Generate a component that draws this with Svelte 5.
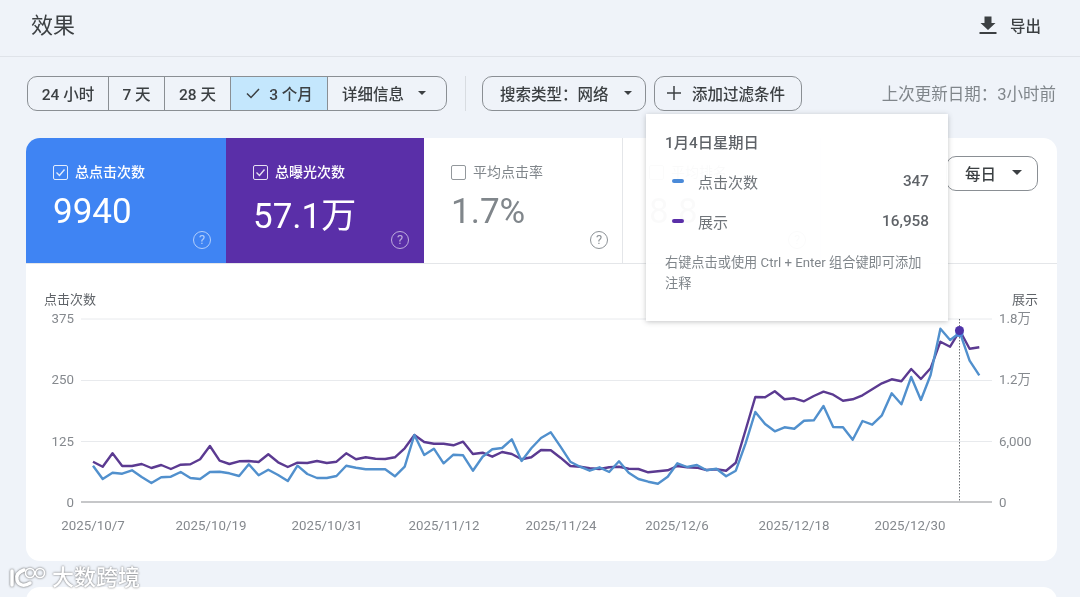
<script>
  const seg = (base, arr) => arr.map((v) => base + v / 3);
  const clicks = [
    ...seg(290, [527,567,548,551,541,561,579,562,560,546,564,567,546,545,550,558,523,556,539,555,573,527,552,564,564,558,527]),
    ...seg(380, [263,268,268,268,289,260,165,225,206,250,224,226,272,230,208,204,178,243,205,174,157,200,245,260,272,262,276,244,278,297,305,311,290,250,261,255,271,266]),
    ...seg(310, [499,482,400,306,342,364,352,356,332,331,288,351,352,389,333,344,316,250,283,201,270,195,56,90,68,152,196])
  ];
  const views = [
    ...seg(290, [515,530,490,528,528,522,534,525,537,524,523,508,468,512,522,514,513,516,493,517,531,518,519,513,519,515,490]),
    ...seg(380, [238,232,236,237,232,205,165,186,191,191,196,185,222,218,230,216,222,238,232,210,211,233,258,260,265,267,262,260,266,267,277,274,271,258,262,263,270,268]),
    ...seg(310, [482,458,360,261,262,244,268,265,274,258,245,254,272,268,256,238,220,208,214,177,207,175,95,110,62,116,112])
  ];
  const toPoints = (ys) => ys.map((y, i) => `${(93 + i * 9.74).toFixed(1)},${y.toFixed(1)}`).join(' ');

  const ranges = [
    { label: '24 小时' },
    { label: '7 天' },
    { label: '28 天' },
    { label: '3 个月', active: true }
  ];
  const tiles = [
    { name: '总点击次数', value: '9940', kind: 'blue', checked: true },
    { name: '总曝光次数', value: '57.1万', kind: 'purple', checked: true },
    { name: '平均点击率', value: '1.7%', kind: 'plain' },
    { name: '平均排名', value: '8.8', kind: 'plain' }
  ];
  const grid = [
    { y: 319, label: 318, left: '375', right: '1.8万' },
    { y: 380.5, label: 379, left: '250', right: '1.2万' },
    { y: 441.5, label: 441, left: '125', right: '6,000' }
  ];
  const dates = [
    ['2025/10/7', 93], ['2025/10/19', 211], ['2025/10/31', 327], ['2025/11/12', 444],
    ['2025/11/24', 561], ['2025/12/6', 677], ['2025/12/18', 794], ['2025/12/30', 910]
  ];
</script>

<div class="page">
  <header class="top">
    <h1>效果</h1>
    <div class="export">
      <svg width="20" height="20" viewBox="0 0 20 20"><path d="M6.500 1.500h7v6.500h4L10 15 2.500 8h4zM1.500 17h17v2h-17z" fill="#3c4043"/></svg>
      <span>导出</span>
    </div>
  </header>

  <div class="toolbar">
    <div class="segments">
      {#each ranges as r}
        <div class="seg" class:active={r.active}>
          {#if r.active}
            <svg width="16" height="16" viewBox="0 0 16 16"><path d="M2 8.500l4 4 8-8.500" fill="none" stroke="#3c4043" stroke-width="1.500"/></svg>
          {/if}
          {r.label}
        </div>
      {/each}
      <div class="seg more">详细信息<i class="caret"></i></div>
    </div>
    <div class="sep"></div>
    <div class="pill search">搜索类型：网络<i class="caret"></i></div>
    <div class="pill add">
      <svg width="14" height="14" viewBox="0 0 14 14"><path d="M7 0v14M0 7h14" stroke="#3c4043" stroke-width="1.500"/></svg>
      添加过滤条件
    </div>
    <div class="updated">上次更新日期：3小时前</div>
  </div>

  <section class="card">
    <div class="tiles">
      {#each tiles as t}
        <div class="tile {t.kind}">
          <div class="tile-head">
            <span class="box">
              {#if t.checked}
                <svg width="11" height="11" viewBox="0 0 11 11"><path d="M1.500 5.500l3 3 5-6" fill="none" stroke="currentColor" stroke-width="1.400"/></svg>
              {/if}
            </span>
            {t.name}
          </div>
          <div class="tile-value">{t.value}</div>
          <span class="help">?</span>
        </div>
      {/each}
      <div class="period">每日<i class="caret big"></i></div>
    </div>

    <svg class="chart" width="1031" height="297" viewBox="26 264 1031 297">
      <text class="axis-title" x="44" y="304">点击次数</text>
      <text class="axis-title" x="1038" y="304" text-anchor="end">展示</text>
      {#each grid as g}
        <line x1="81" x2="992" y1={g.y} y2={g.y} stroke="#e8eaed" />
        <text class="tick" x="74" y={g.label + 4.500} text-anchor="end">{g.left}</text>
        <text class="tick" x="999" y={g.label + 4.500}>{g.right}</text>
      {/each}
      <line x1="81" x2="992" y1="502" y2="502" stroke="#8d9094" stroke-width="1.200" />
      <text class="tick" x="74" y="507" text-anchor="end">0</text>
      <text class="tick" x="999" y="507">0</text>
      {#each dates as [label, x]}
        <text class="tick" x={x} y="530" text-anchor="middle">{label}</text>
      {/each}
      <line x1="959.500" x2="959.500" y1="319" y2="502" stroke="#6d7175" stroke-dasharray="1.500 1.500" />
      <polyline points={toPoints(views)} fill="none" stroke="#5b3a91" stroke-width="2.400" stroke-linejoin="round" />
      <polyline points={toPoints(clicks)} fill="none" stroke="#5190cd" stroke-width="2.400" stroke-linejoin="round" />
      <circle cx="959.500" cy="333" r="4" fill="#4a86d8" />
      <circle cx="959.500" cy="330.500" r="4.500" fill="#4f33a8" />
    </svg>
  </section>

  <div class="next-card"></div>

  <aside class="tooltip">
    <div class="tip-title">1月4日星期日</div>
    <div class="tip-row"><i class="dash c"></i><span>点击次数</span><b>347</b></div>
    <div class="tip-row"><i class="dash v"></i><span>展示</span><b>16,958</b></div>
    <p>右键点击或使用 Ctrl + Enter 组合键即可添加注释</p>
  </aside>

  <div class="mark">
    <svg width="40" height="24" viewBox="0 0 40 24">
      <path d="M3 5v14M15 4C9 6 7 10 8 14c1 5 7 7 13 3" fill="none" stroke="#fff" stroke-width="3.500" stroke-linecap="round"/>
      <circle cx="21" cy="7" r="4.500" fill="none" stroke="#fff" stroke-width="1.600"/>
      <circle cx="31" cy="7" r="4.500" fill="none" stroke="#fff" stroke-width="1.600"/>
    </svg>
    <span>大数跨境</span>
  </div>
</div>

<style>
  :global(body) {
    margin: 0;
    background: #eff3f9;
    overflow: hidden;
  }
  .page {
    position: relative;
    width: 1080px;
    height: 597px;
    overflow: hidden;
    background: #eff3f9;
    color: #3c4043;
    font-family: Roboto, "Noto Sans CJK SC", sans-serif;
    filter: blur(.35px);
  }
  .top {
    height: 57px;
    box-sizing: border-box;
    border-bottom: 1px solid #dfe3e9;
    display: flex;
    align-items: center;
    justify-content: space-between;
    padding: 0 39px 6px 31px;
  }
  h1 {
    margin: 0;
    font-size: 22px;
    line-height: 30px;
    font-weight: 400;
    padding-bottom: 0;
    transform: translateY(1px);
  }
  .export {
    display: flex;
    align-items: center;
    gap: 12px;
    font-size: 15.500px;
    font-weight: 500;
  }
  .toolbar {
    display: flex;
    align-items: stretch;
    height: 35px;
    margin: 19px 24px 0 27px;
    font-size: 15.500px;
    font-weight: 500;
  }
  .segments {
    display: flex;
    width: 420px;
    box-sizing: border-box;
    border: 1px solid #8a8f94;
    border-radius: 10px;
    overflow: hidden;
  }
  .seg {
    display: flex;
    align-items: center;
    justify-content: center;
    gap: 8px;
    box-sizing: border-box;
    border-right: 1px solid #8a8f94;
    flex: none;
    white-space: nowrap;
    padding-bottom: 2px;
  }
  .seg:nth-child(1) { width: 81px; }
  .seg:nth-child(2) { width: 56px; }
  .seg:nth-child(3) { width: 66px; }
  .seg:nth-child(4) { width: 97px; }
  .seg.active { background: #c4e7fd; }
  .seg.more {
    flex: 1;
    border-right: 0;
    justify-content: flex-start;
    padding-left: 14px;
    gap: 14px;
  }
  .caret {
    display: inline-block;
    width: 0;
    height: 0;
    border: 4px solid transparent;
    border-top: 4px solid #3c4043;
    border-bottom: 0;
  }
  .caret.big {
    border-width: 5px 5px 0;
  }
  .sep {
    width: 1px;
    background: #d8dce1;
    margin: 0 16px 0 18px;
  }
  .pill {
    display: flex;
    align-items: center;
    box-sizing: border-box;
    border: 1px solid #8a8f94;
    border-radius: 10px;
    white-space: nowrap;
    padding-bottom: 2px;
  }
  .search {
    width: 164px;
    padding-left: 17px;
    gap: 15px;
  }
  .add {
    width: 148px;
    margin-left: 8px;
    padding-left: 12px;
    gap: 11px;
  }
  .updated {
    margin-left: auto;
    align-self: center;
    font-size: 16.500px;
    font-weight: 400;
    color: #80868b;
    white-space: nowrap;
    padding-bottom: 2px;
  }
  .card {
    width: 1031px;
    height: 423px;
    margin: 27px 0 0 26px;
    background: #fff;
    border-radius: 14px;
    overflow: hidden;
  }
  .tiles {
    display: flex;
    height: 126px;
    box-sizing: border-box;
    border-bottom: 1px solid #e4e6e9;
  }
  .tile {
    position: relative;
    width: 198px;
    box-sizing: border-box;
    padding: 25px 0 0 27px;
    color: #80868b;
    border-right: 1px solid #e4e6e9;
  }
  .tile:first-child { width: 200px; }
  .tile:nth-child(3) { width: 199px; }
  .tile:nth-child(4) { padding-left: 26px; }
  .tile.blue {
    background: #3f84f3;
    color: #fff;
    border: 0;
  }
  .tile.purple {
    background: #5a2fa8;
    color: #fff;
    border: 0;
  }
  .tile-head {
    display: flex;
    align-items: center;
    gap: 7px;
    font-size: 14px;
    font-weight: 500;
    line-height: 18px;
  }
  .tile.plain .tile-head { font-weight: 400; }
  .box {
    width: 15px;
    height: 15px;
    box-sizing: border-box;
    border: 1.500px solid currentColor;
    border-radius: 2px;
    display: flex;
    align-items: center;
    justify-content: center;
    opacity: .85;
  }
  .tile-value {
    margin-top: 9px;
    font-size: 35px;
    line-height: 43px;
    white-space: nowrap;
  }
  .tile.purple .tile-value { margin-top: 14px; }
  .help {
    position: absolute;
    right: 15px;
    bottom: 14px;
    width: 18px;
    height: 18px;
    box-sizing: border-box;
    border: 1.500px solid currentColor;
    border-radius: 50%;
    font-size: 13px;
    line-height: 15px;
    text-align: center;
    opacity: .6;
  }
  .tile.plain .help { opacity: .9; right: 14px; }
  .period {
    display: flex;
    align-items: center;
    gap: 16px;
    box-sizing: border-box;
    width: 92px;
    height: 35px;
    margin: 18px 19px 0 auto;
    padding: 0 0 2px 18px;
    border: 1px solid #8a8f94;
    border-radius: 10px;
    font-size: 15.500px;
    font-weight: 500;
  }
  .chart {
    display: block;
  }
  .axis-title {
    font-size: 13px;
    fill: #5f6368;
  }
  .tick {
    font-size: 13.300px;
    fill: #85898e;
  }
  .next-card {
    height: 40px;
    margin: 26px 23px 0 26px;
    background: #fff;
    border-radius: 14px;
  }
  .tooltip {
    position: absolute;
    left: 646px;
    top: 114px;
    width: 302px;
    height: 207px;
    box-sizing: border-box;
    padding: 19px 19px 0;
    background: rgba(255, 255, 255, .96);
    box-shadow: 0 1px 5px rgba(60, 64, 67, .3);
  }
  .tip-title {
    font-size: 15.300px;
    font-weight: 500;
    line-height: 20px;
    color: #5f6368;
  }
  .tip-row {
    display: flex;
    align-items: center;
    height: 40px;
    padding-left: 7px;
    font-size: 15px;
    color: #70757a;
  }
  .tip-title + .tip-row { margin-top: 8px; }
  .tip-row span { margin-left: 14px; }
  .tip-row b {
    margin-left: auto;
    font-size: 15.300px;
    font-weight: 500;
    color: #5f6368;
  }
  .dash {
    width: 12px;
    height: 4px;
    border-radius: 2px;
  }
  .dash.c { background: #4a8ad8; }
  .dash.v { background: #5a2fa8; }
  .tooltip p {
    margin: 11px 0 0;
    font-size: 13.200px;
    line-height: 21px;
    color: #80868b;
  }
  .mark {
    position: absolute;
    left: 9px;
    bottom: 7px;
    display: flex;
    align-items: center;
    gap: 3px;
    color: #fff;
    font-size: 22px;
    line-height: 24px;
    font-weight: 500;
    text-shadow: 0 0 2px rgba(70, 70, 70, .9);
  }
  .mark svg {
    filter: drop-shadow(0 0 1px rgba(70, 70, 70, .9));
  }
</style>
